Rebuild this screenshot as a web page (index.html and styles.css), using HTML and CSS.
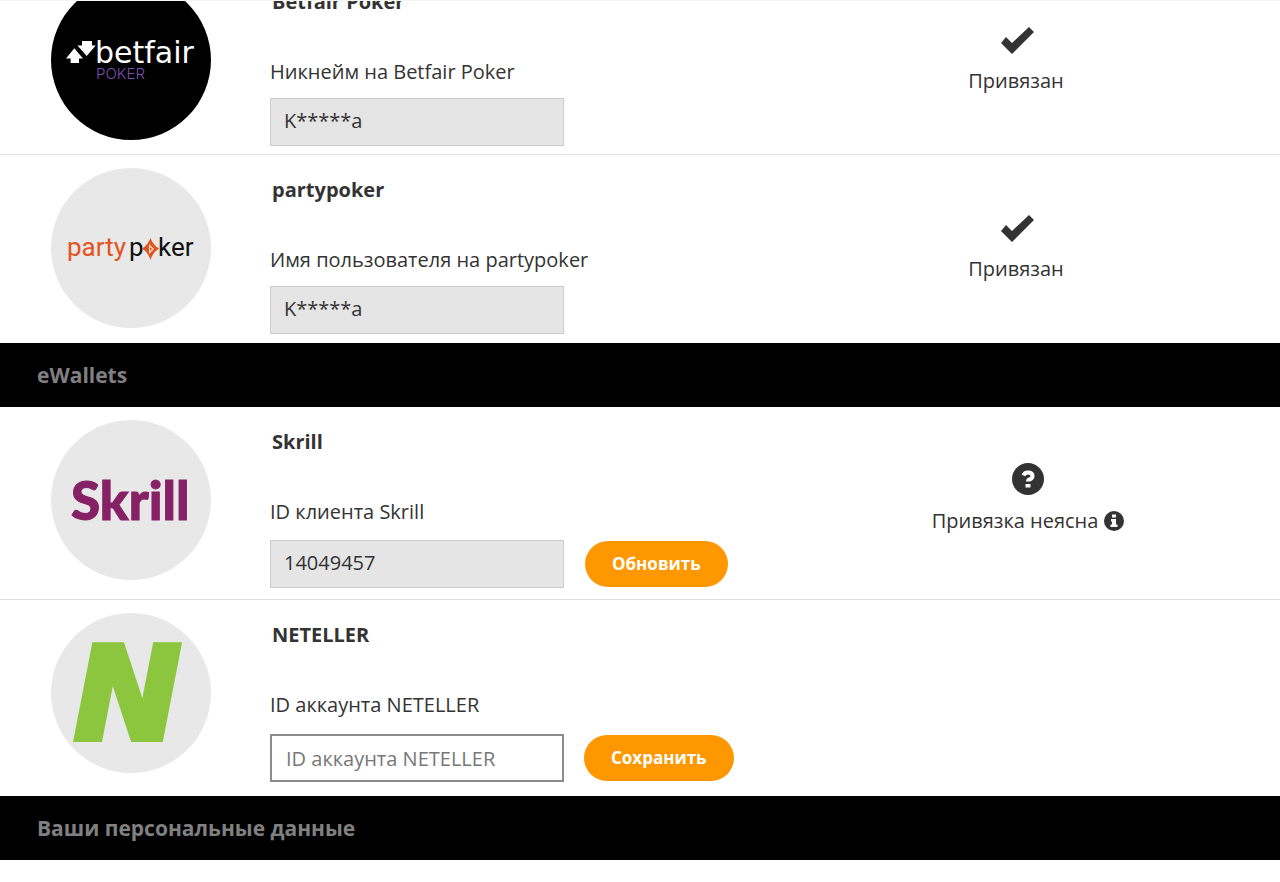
FILE: index.html
```html
<!DOCTYPE html>
<html lang="ru">
<head>
<meta charset="utf-8">
<meta name="viewport" content="width=device-width, initial-scale=1">
<title>Аккаунты</title>
<link rel="stylesheet" href="styles.css">
</head>
<body>
<main class="accounts">
  <section class="group group--scrolled">
    <article class="row">
      <svg class="logo" viewBox="0 0 160 160" role="img" aria-label="betfair poker">
        <circle cx="80" cy="80" r="80" fill="#000"/>
        <path d="M23.300 68.300L15 78.500H19.600V83H28V78.500H32Z M31 61H41V65.600H44.700L35.700 76L26.500 65.600H31Z" fill="#fff"/>
        <text class="logo-betfair" x="44" y="83">betfair</text>
        <text class="logo-betfair-sub" x="45" y="99">POKER</text>
      </svg>
      <form class="account">
        <h3 class="title">Betfair Poker</h3>
        <label class="label" for="betfair">Никнейм на Betfair Poker</label>
        <div class="controls"><input class="input" id="betfair" value="K*****a" readonly></div>
      </form>
      <div class="status">
        <svg class="status-icon" viewBox="0 0 32 32" aria-hidden="true"><path d="M6 14L1 20L12 31L34 9L29 4L12 20Z" fill="#333"/></svg>
        <p class="status-text">Привязан</p>
      </div>
    </article>
    <article class="row">
      <svg class="logo" viewBox="0 0 160 160" role="img" aria-label="partypoker">
        <circle cx="80" cy="80" r="80" fill="#e8e8e8"/>
        <text class="logo-party" x="16" y="88" fill="#e2531f">party</text>
        <text class="logo-party" x="78" y="88" fill="#111">p</text>
        <path d="M99.500 70Q102 77 108 80.500Q102 84 99.500 92Q97 84 91 80.500Q97 77 99.500 70Z" fill="#e2531f"/>
        <path d="M98 76V86L103 81Z" fill="#f9dccb"/><path d="M99 79V83L101 81Z" fill="#e2531f"/>
        <text class="logo-party" x="107" y="88" fill="#111">ker</text>
      </svg>
      <form class="account">
        <h3 class="title">partypoker</h3>
        <label class="label" for="party">Имя пользователя на partypoker</label>
        <div class="controls"><input class="input" id="party" value="K*****a" readonly></div>
      </form>
      <div class="status">
        <svg class="status-icon" viewBox="0 0 32 32" aria-hidden="true"><path d="M6 14L1 20L12 31L34 9L29 4L12 20Z" fill="#333"/></svg>
        <p class="status-text">Привязан</p>
      </div>
    </article>
  </section>

  <h2 class="heading">eWallets</h2>
  <section class="group">
    <article class="row row--action">
      <svg class="logo" viewBox="0 0 160 160" role="img" aria-label="Skrill">
        <circle cx="80" cy="80" r="80" fill="#e8e8e8"/>
        <text class="logo-skrill" x="20" y="100">Skrill</text>
      </svg>
      <form class="account">
        <h3 class="title">Skrill</h3>
        <label class="label" for="skrill">ID клиента Skrill</label>
        <div class="controls">
          <input class="input" id="skrill" value="14049457" readonly>
          <button class="button" type="button">Обновить</button>
        </div>
      </form>
      <div class="status status--unclear">
        <svg class="status-icon" viewBox="0 0 32 32" aria-hidden="true"><circle cx="16" cy="16" r="16" fill="#333"/><path d="M11.500 12.500Q12.500 9.500 16 9.500Q20.500 9.500 20.500 13Q20.500 15.500 17.500 16.500Q16 17 16 18.500" fill="none" stroke="#fff" stroke-width="4"/><path d="M13.500 21H18.500V24.500H13.500Z" fill="#fff"/></svg>
        <p class="status-text">Привязка неясна
          <svg class="info-icon" viewBox="0 0 20 20" role="img" aria-label="Информация"><circle cx="10" cy="10" r="10" fill="#333"/><path d="M8 3.500H12V6.500H8Z M7 8H12V13.500H13.500V16H6.500V13.500H8V10.500H7Z" fill="#fff"/></svg>
        </p>
      </div>
    </article>
    <article class="row row--edit">
      <svg class="logo" viewBox="0 0 160 160" role="img" aria-label="NETELLER">
        <circle cx="80" cy="80" r="80" fill="#e8e8e8"/>
        <text class="logo-neteller" x="23" y="126">N</text>
      </svg>
      <form class="account">
        <h3 class="title">NETELLER</h3>
        <label class="label" for="neteller">ID аккаунта NETELLER</label>
        <div class="controls">
          <input class="input input--edit" id="neteller" placeholder="ID аккаунта NETELLER">
          <button class="button" type="button">Сохранить</button>
        </div>
      </form>
    </article>
  </section>

  <h2 class="heading">Ваши персональные данные</h2>
</main>
</body>
</html>
```
FILE: styles.css
```css
* { box-sizing: border-box; }

body {
  margin: 0;
  background: #fff;
  color: #333;
  font: 20px/28px "Open Sans", "Noto Sans", sans-serif;
}

h2, h3, p { margin: 0; }

.accounts {
  overflow: hidden;
  border-top: 1px solid #f4f4f4;
}

.group--scrolled { margin-top: -34px; }

.row {
  display: grid;
  grid-template-columns: 160px minmax(0, 1fr) 352px;
  column-gap: 59px;
  align-items: start;
  padding: 0 29px 8px 51px;
  border-bottom: 1px solid #ddd;
}

.row:last-child { border-bottom-color: transparent; }
.row--action { padding-bottom: 11px; }
.row--edit { padding-bottom: 13px; }

.logo {
  display: block;
  width: 160px;
  height: 160px;
  margin-top: 13px;
}

.logo-betfair {
  font: 400 30px "DejaVu Sans", sans-serif;
  fill: #fff;
}

.logo-betfair-sub { font: 300 15px Inter, sans-serif; fill: #7d4fb0; }
.logo-party { font: 400 26px Roboto, sans-serif; }

.logo-skrill {
  font: 900 53px Lato, sans-serif;
  fill: #862165;
  stroke: #862165;
  stroke-width: 1px;
}

.logo-neteller {
  font: italic bold 128px "DejaVu Sans", sans-serif;
  fill: #8cc63f;
  stroke: #8cc63f;
  stroke-width: 6px;
}

.account {
  display: flex;
  flex-direction: column;
  padding-top: 21px;
}

.title {
  padding-left: 2px;
  font-size: 20px;
  font-weight: 700;
  line-height: 28px;
}

.label { margin-top: 42px; }

.controls {
  display: flex;
  align-items: center;
  gap: 21px;
  margin-top: 12px;
}

.row--action .controls { margin-top: 14px; }

.row--edit .controls {
  gap: 20px;
  margin-top: 15px;
}

.input {
  width: 294px;
  height: 48px;
  padding: 0 13px 3px;
  border: 1px solid #ccc;
  border-radius: 0;
  background: #e5e5e5;
  color: #333;
  font: inherit;
}

.input--edit {
  padding: 0 14px;
  border: 2px solid #8c8c8c;
  background: #fff;
}

.input::placeholder { color: #777; opacity: 1; }

.button {
  height: 46px;
  padding: 0 27px;
  border: 0;
  border-radius: 23px;
  background: #ff9800;
  color: #fff;
  font: 700 17px/24px "Open Sans", "Noto Sans", sans-serif;
}

.status {
  display: flex;
  flex-direction: column;
  align-items: center;
  gap: 12px;
  padding: 56px 118px 0 0;
  white-space: nowrap;
}

.status--unclear { padding-right: 94px; }

.status-icon {
  width: 32px;
  height: 32px;
  overflow: visible;
}

.status-text {
  display: flex;
  align-items: center;
  gap: 6px;
}

.info-icon { width: 20px; height: 20px; }

.heading {
  padding: 18px 37px;
  background: #000;
  color: #808080;
  font-size: 21px;
  font-weight: 700;
  line-height: 28px;
}
```
